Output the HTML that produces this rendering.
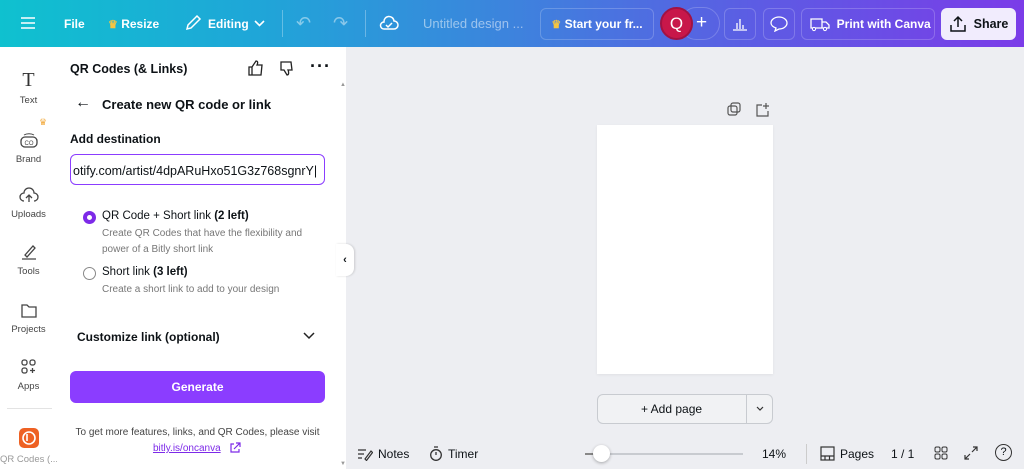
<!DOCTYPE html>
<html><head><style>
*{box-sizing:border-box;margin:0;padding:0}
body{width:1024px;height:469px;overflow:hidden;font-family:"Liberation Sans",sans-serif;background:#edeef2;position:relative;color:#0d1216}
.top{position:absolute;left:0;top:0;width:1024px;height:47px;background:linear-gradient(90deg,#0fc1cf 0%,#1fa6d8 25%,#3d83dd 50%,#5e5ae4 75%,#7b3ce8 100%);color:#fff;font-weight:bold;font-size:12px;white-space:nowrap}
.top>*{position:absolute}
.btn{border:1px solid rgba(255,255,255,.2);border-radius:6px;height:32px;top:8px;display:flex;align-items:center;justify-content:center}
.side{position:absolute;left:0;top:47px;width:57px;height:422px;background:#fff}
.si{position:absolute;left:0;width:57px;text-align:center;font-size:9.5px;color:#444}
.panel{position:absolute;left:57px;top:47px;width:289px;height:422px;background:#fff}
.panel>*{position:absolute}
.abs{position:absolute}
</style></head><body>
<div class="top">
 <svg style="left:20px;top:16px" width="16" height="14"><path d="M1 2h14M1 7h14M1 12h14" stroke="#fff" stroke-width="1.6"/></svg>
 <div style="left:64px;top:17px">File</div>
 <div style="left:108px;top:17px"><span style="color:#f5c542;font-size:11px">♛</span> Resize</div>
 <svg style="left:184px;top:14px" width="18" height="18"><path d="M3 15l1-4 9-9 3 3-9 9z" fill="none" stroke="#fff" stroke-width="1.5"/></svg>
 <div style="left:208px;top:17px">Editing</div>
 <svg style="left:254px;top:20px" width="11" height="7"><path d="M1 1l4.5 4.5L10 1" fill="none" stroke="#fff" stroke-width="1.6"/></svg>
 <div style="left:282px;top:10px;width:1px;height:27px;background:rgba(255,255,255,.3)"></div>
 <div style="left:296px;top:13px;opacity:.45;font-size:18px;font-weight:normal">↶</div>
 <div style="left:333px;top:13px;opacity:.45;font-size:18px;font-weight:normal">↷</div>
 <div style="left:365px;top:10px;width:1px;height:27px;background:rgba(255,255,255,.3)"></div>
 <svg style="left:379px;top:14px" width="20" height="18"><path d="M5 15h10a4 4 0 0 0 0-8 5 5 0 0 0-10 1 3.5 3.5 0 0 0 0 7z" fill="none" stroke="#fff" stroke-width="1.5"/><path d="M7 11l2 2 4-4" fill="none" stroke="#fff" stroke-width="1.5"/></svg>
 <div style="left:423px;top:16px;opacity:.5;font-weight:normal;font-size:13px">Untitled design ...</div>
 <div class="btn" style="left:540px;width:114px"><span style="color:#f5c542;font-size:11px">♛</span>&nbsp;Start your fr...</div>
 <div style="left:680px;top:7px;width:40px;height:33px;border-radius:17px;border:1px solid rgba(255,255,255,.2)"></div>
 <div style="left:660px;top:7px;width:33px;height:33px;border-radius:50%;background:#c8174a;border:2px solid #a11243;display:flex;align-items:center;justify-content:center;font-size:17px;font-weight:normal">Q</div>
 <div style="left:696px;top:12px;font-size:19px;font-weight:normal">+</div>
 <div class="btn" style="left:724px;width:32px"><svg width="16" height="14"><path d="M1 13h14M5 12V6M8 12V2M11 12V8" stroke="#fff" stroke-width="1.3"/></svg></div>
 <div class="btn" style="left:763px;width:32px"><svg width="18" height="16"><path d="M9 1c4.4 0 8 2.7 8 6s-3.6 6-8 6l-4 2 1-3c-3-1-5-3-5-5 0-3.3 3.6-6 8-6z" fill="none" stroke="#fff" stroke-width="1.3"/></svg></div>
 <div class="btn" style="left:801px;width:134px;justify-content:flex-start;padding-left:8px"><svg width="20" height="16"><path d="M1 3h11v9H1zM12 6h4l3 3v3h-7" fill="none" stroke="#fff" stroke-width="1.3"/><circle cx="4" cy="13" r="1.6" fill="#6556e4" stroke="#fff"/><circle cx="15" cy="13" r="1.6" fill="#6556e4" stroke="#fff"/></svg>&nbsp;&nbsp;Print with Canva</div>
 <div class="btn" style="left:941px;width:75px;background:#f1ecfd;color:#0d1216;border:none;font-size:12.5px"><svg width="18" height="18"><path d="M2 10v6h14v-6M9 12V2M5 6l4-4 4 4" fill="none" stroke="#0d1216" stroke-width="1.5"/></svg>&nbsp;&nbsp;Share</div>
</div>

<div class="side">
 <div class="si" style="top:22px"><div style="font-family:'Liberation Serif',serif;font-size:20px;color:#333">T</div><div style="margin-top:3px">Text</div></div>
 <div style="position:absolute;left:39px;top:70px;color:#f2a93b;font-size:9px">♛</div>
 <div class="si" style="top:84px"><svg width="20" height="18"><rect x="2" y="6" width="16" height="10" rx="4" fill="none" stroke="#444" stroke-width="1.3"/><path d="M5 4a7 4 0 0 1 10 0" fill="none" stroke="#444"/><text x="10" y="14" font-size="6" text-anchor="middle" fill="#444">CO</text></svg><div style="margin-top:2px">Brand</div></div>
 <div class="si" style="top:139px"><svg width="20" height="18"><path d="M5 15a4 4 0 0 1 0-8 5 5 0 0 1 10 0 4 4 0 0 1 0 8" fill="none" stroke="#444" stroke-width="1.3"/><path d="M10 16V9M7 12l3-3 3 3" fill="none" stroke="#444" stroke-width="1.3"/></svg><div style="margin-top:2px">Uploads</div></div>
 <div class="si" style="top:196px"><svg width="20" height="18"><path d="M6 12l8-9 2 2-8 9zM3 16h14" fill="none" stroke="#444" stroke-width="1.3"/></svg><div style="margin-top:2px">Tools</div></div>
 <div class="si" style="top:254px"><svg width="20" height="18"><path d="M3 4h5l2 2h7v10H3z" fill="none" stroke="#444" stroke-width="1.3"/></svg><div style="margin-top:2px">Projects</div></div>
 <div class="si" style="top:311px"><svg width="20" height="18"><rect x="3" y="2" width="5" height="5" rx="2" fill="none" stroke="#444" stroke-width="1.3"/><rect x="11" y="2" width="5" height="5" rx="2" fill="none" stroke="#444" stroke-width="1.3"/><rect x="3" y="10" width="5" height="5" rx="2" fill="none" stroke="#444" stroke-width="1.3"/><path d="M13.5 10v5M11 12.5h5" stroke="#444" stroke-width="1.3"/></svg><div style="margin-top:2px">Apps</div></div>
 <div style="position:absolute;left:7px;top:361px;width:45px;height:1px;background:#e3e3e3"></div>
 <div style="position:absolute;left:19px;top:381px;width:20px;height:20px;border-radius:5px;background:#ee6123"><svg width="20" height="20"><circle cx="10" cy="10" r="6" fill="none" stroke="#fff" stroke-width="1.6"/><path d="M8 6v7" stroke="#fff" stroke-width="1.6"/></svg></div>
 <div class="si" style="top:407px;color:#999;white-space:nowrap;overflow:hidden">QR Codes (...</div>
</div>

<div class="panel">
 <div style="left:13px;top:15px;font-weight:bold;font-size:12.5px">QR Codes (&amp; Links)</div>
 <svg style="left:190px;top:12px" width="18" height="18"><path d="M2 8h3v8H2zM5 8l4-6c2 0 2 2 1 4h5l-1 10H5" fill="none" stroke="#222" stroke-width="1.3"/></svg>
 <svg style="left:221px;top:13px" width="18" height="18"><path d="M3 2h10l1 8h-4c1 2 1 5-1 5L6 10H3z" fill="none" stroke="#222" stroke-width="1.3"/></svg>
 <div style="left:253px;top:9px;font-size:18px;font-weight:bold;letter-spacing:1px">···</div>
 <div style="left:18px;top:47px;font-size:16px">←</div>
 <div style="left:45px;top:50px;font-weight:bold;font-size:13px">Create new QR code or link</div>
 <div style="left:13px;top:85px;font-weight:bold;font-size:12px">Add destination</div>
 <div style="left:13px;top:107px;width:255px;height:31px;border:1px solid #8b3dff;border-radius:6px;overflow:hidden;font-size:12.5px;padding:9px 0 0 2px;white-space:nowrap">otify.com/artist/4dpARuHxo51G3z768sgnrY|</div>
 <div style="left:26px;top:164px;width:13px;height:13px;border-radius:50%;border:4px solid #7d2ae8"></div>
 <div style="left:45px;top:163px;font-size:11.5px">QR Code + Short link <b>(2 left)</b></div>
 <div style="left:45px;top:179px;font-size:10px;color:#777;line-height:16px">Create QR Codes that have the flexibility and<br>power of a Bitly short link</div>
 <div style="left:26px;top:220px;width:13px;height:13px;border-radius:50%;border:1px solid #888"></div>
 <div style="left:45px;top:219px;font-size:11.5px">Short link <b>(3 left)</b></div>
 <div style="left:45px;top:237px;font-size:10px;color:#777">Create a short link to add to your design</div>
 <div style="left:20px;top:283px;font-weight:bold;font-size:12px">Customize link (optional)</div>
 <svg style="left:246px;top:285px" width="12" height="8"><path d="M1 1l5 5 5-5" fill="none" stroke="#222" stroke-width="1.5"/></svg>
 <div style="left:13px;top:324px;width:255px;height:32px;border-radius:6px;background:#8b3dff;color:#fff;font-weight:bold;font-size:12px;text-align:center;line-height:32px">Generate</div>
 <div style="left:13px;top:380px;width:255px;text-align:center;font-size:10px;color:#444">To get more features, links, and QR Codes, please visit</div>
 <div style="left:96px;top:396px;font-size:10px;color:#7d2ae8;text-decoration:underline">bitly.is/oncanva</div>
 <svg style="left:172px;top:395px" width="12" height="12"><path d="M5 2H2v8h8V7M7 1h4v4M11 1L5 7" fill="none" stroke="#7d2ae8" stroke-width="1.2"/></svg>
 <div style="left:283px;top:35px;font-size:6px;color:#999">▲</div>
 <div style="left:283px;top:414px;font-size:6px;color:#999">▼</div>
</div>
<div class="abs" style="left:336px;top:244px;width:18px;height:32px;background:#fff;border-radius:0 8px 8px 0;box-shadow:1px 0 2px rgba(0,0,0,.15);font-size:11px;font-weight:bold;text-align:center;line-height:32px">‹</div>

<svg class="abs" style="left:726px;top:102px" width="16" height="16"><rect x="2" y="4" width="9" height="9" rx="2" fill="none" stroke="#555" stroke-width="1.2"/><rect x="5" y="1" width="9" height="9" rx="2" fill="none" stroke="#555" stroke-width="1.2"/></svg>
<svg class="abs" style="left:754px;top:102px" width="16" height="16"><path d="M8 3H3v11h11V9M12 1v6M9 4h6" fill="none" stroke="#555" stroke-width="1.2"/></svg>
<div class="abs" style="left:597px;top:125px;width:176px;height:249px;background:#fff;box-shadow:0 1px 3px rgba(0,0,0,.06)"></div>
<div class="abs" style="left:597px;top:394px;width:176px;height:30px;border:1px solid #c8cbd0;border-radius:6px;background:#f1f2f4"></div>
<div class="abs" style="left:746px;top:394px;width:1px;height:30px;background:#c8cbd0"></div>
<div class="abs" style="left:641px;top:402px;font-size:12px">+ Add page</div>
<svg class="abs" style="left:756px;top:406px" width="8" height="6"><path d="M1 1l3 3 3-3" fill="none" stroke="#333" stroke-width="1.2"/></svg>

<div class="abs" style="left:357px;top:447px;font-size:12px;display:flex;align-items:center;gap:5px"><svg width="16" height="14"><path d="M1 3h8M1 7h6M1 11h4M8 12l6-8 1.5 1.5-6 8z" fill="none" stroke="#333" stroke-width="1.2"/></svg>Notes</div>
<div class="abs" style="left:429px;top:446px;font-size:12px;display:flex;align-items:center;gap:5px"><svg width="14" height="15"><circle cx="7" cy="9" r="5.3" fill="none" stroke="#333" stroke-width="1.3"/><path d="M5 1h4M7 6v3" stroke="#333" stroke-width="1.3"/></svg>Timer</div>
<div class="abs" style="left:585px;top:453px;width:158px;height:2px;background:#c8cbd0"></div>
<div class="abs" style="left:585px;top:453px;width:15px;height:2px;background:#888"></div>
<div class="abs" style="left:593px;top:445px;width:17px;height:17px;border-radius:50%;background:#fff;box-shadow:0 1px 3px rgba(0,0,0,.3)"></div>
<div class="abs" style="left:762px;top:447px;font-size:12px">14%</div>
<div class="abs" style="left:806px;top:444px;width:1px;height:20px;background:#ccc"></div>
<div class="abs" style="left:820px;top:446px;font-size:12px;display:flex;align-items:center;gap:5px"><svg width="15" height="15"><rect x="1" y="1" width="13" height="13" fill="none" stroke="#333" stroke-width="1.2"/><path d="M1 10h13M5 10v4M9.5 10v4" stroke="#333" stroke-width="1.2"/></svg>Pages</div>
<div class="abs" style="left:891px;top:447px;font-size:12px">1 / 1</div>
<svg class="abs" style="left:934px;top:446px" width="14" height="14"><rect x="1" y="1" width="5" height="5" rx="1.5" fill="none" stroke="#333"/><rect x="8" y="1" width="5" height="5" rx="1.5" fill="none" stroke="#333"/><rect x="1" y="8" width="5" height="5" rx="1.5" fill="none" stroke="#333"/><rect x="8" y="8" width="5" height="5" rx="1.5" fill="none" stroke="#333"/></svg>
<svg class="abs" style="left:964px;top:446px" width="14" height="14"><path d="M8 6l5-5M9 1h4v4M6 8l-5 5M1 9v4h4" fill="none" stroke="#333" stroke-width="1.2"/></svg>
<div class="abs" style="left:995px;top:444px;width:17px;height:17px;border-radius:50%;border:1.3px solid #333;font-size:11px;text-align:center;line-height:15px">?</div>
</body></html>
